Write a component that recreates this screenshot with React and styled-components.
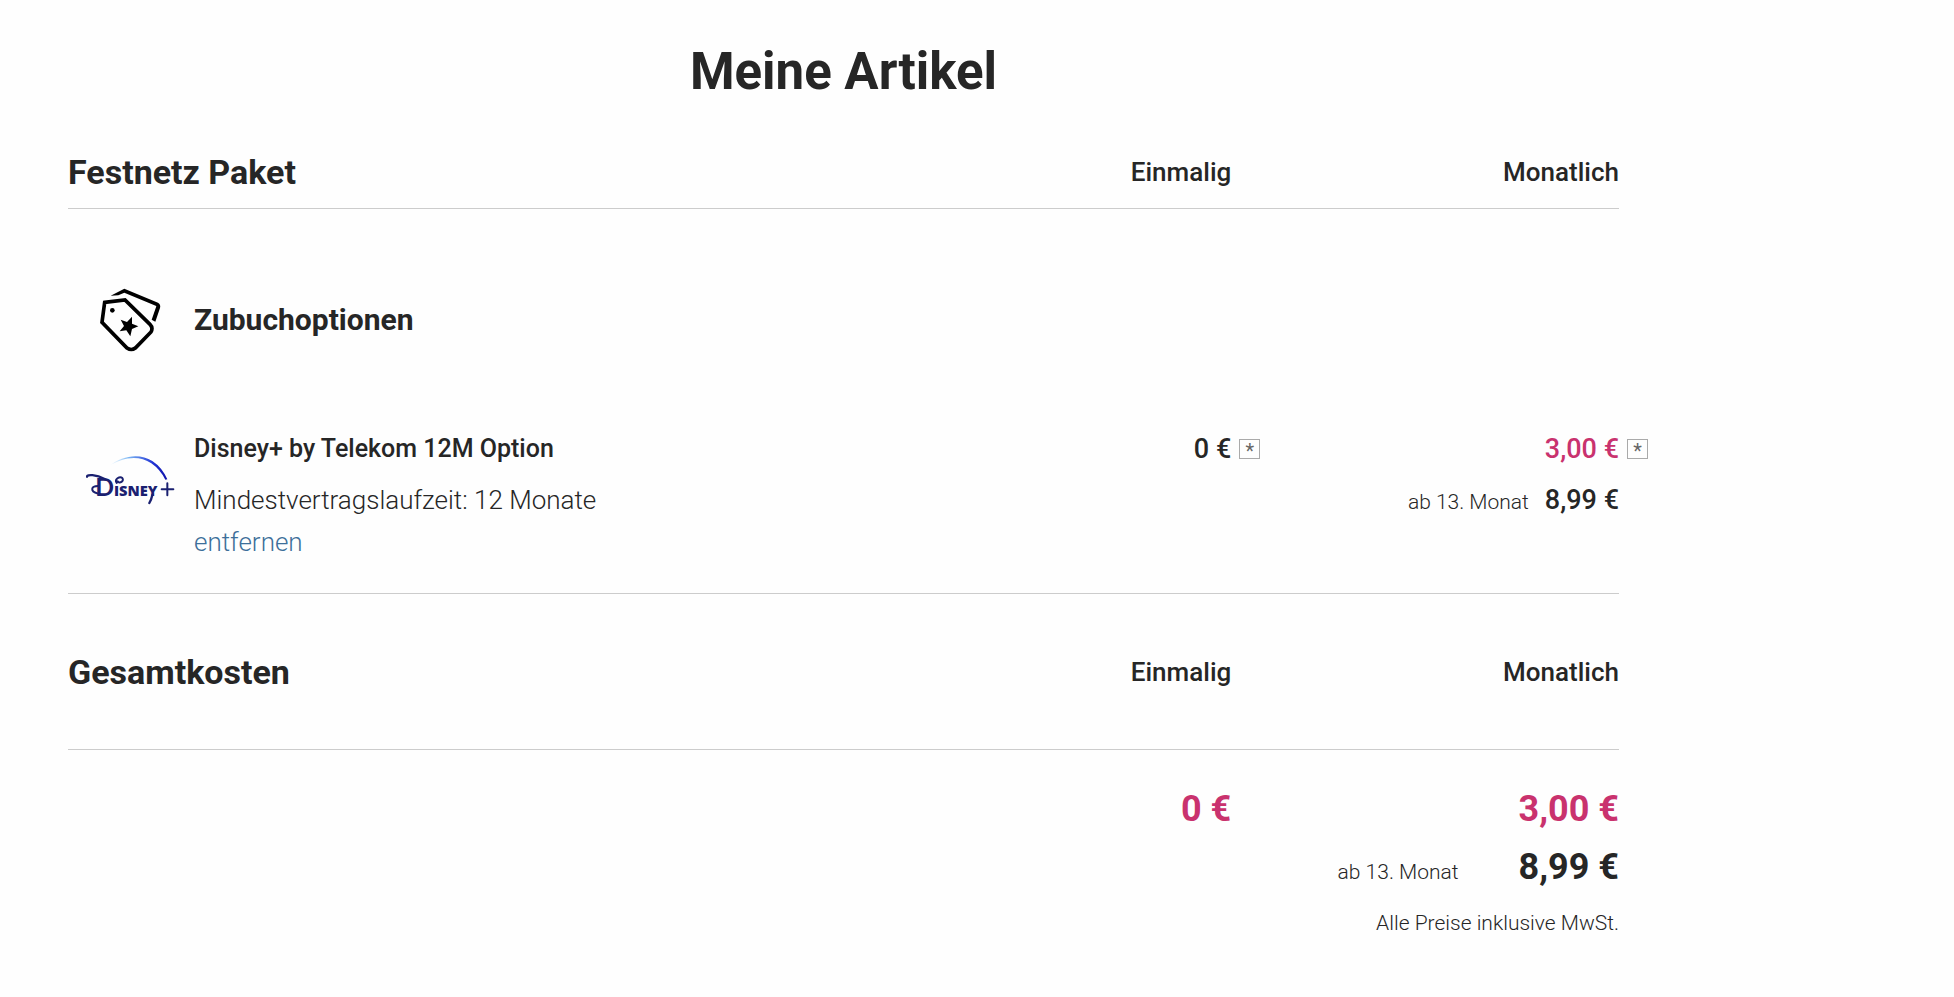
import styled, { createGlobalStyle } from "styled-components"

const GlobalStyle = createGlobalStyle`
    body {
        margin: 0;
        background-color: #fefefe;
        color: #262626;
        font-family: Roboto, "Liberation Sans", sans-serif;
    }
`

const CartContainer = styled.main`
    margin: 0 335px 0 68px;
    padding: 40px 0 48px;
`

const Cart__title = styled.h1`
    margin: 0 0 32px;
    font-size: 51px;
    line-height: 64px;
    font-weight: 700;
    text-align: center;
`

const CostTable = styled.table`
    width: 100%;
    table-layout: fixed;
    border-collapse: separate;
    border-spacing: 0;
`

const CostTable__headRow = styled.tr`
    height: ${props => props.$tall ? "156px" : "73px"};
`

const CostTable__title = styled.th`
    width: 50%;
    padding: 0;
    border-bottom: 1px solid #cccccc;
    font-size: 34px;
    line-height: 40px;
    font-weight: 700;
    text-align: left;
`

const CostTable__label = styled.th`
    width: 25%;
    padding: 0;
    border-bottom: 1px solid #cccccc;
    font-size: 26px;
    line-height: 36px;
    font-weight: 500;
    text-align: right;
`

const Category__cell = styled.th`
    height: 222px;
    padding: 0;
    font-size: 30px;
    line-height: 40px;
    font-weight: 700;
    text-align: left;
`

const Item = styled.div`
    display: flex;
    align-items: ${props => props.$top ? "flex-start" : "center"};
`

const Item__media = styled.div`
    display: flex;
    justify-content: center;
    flex: 0 0 126px;
    padding-top: ${props => props.$top ? "22px" : "0"};
`

const Item__cell = styled.td`
    padding: 0 0 30px;
    border-bottom: 1px solid #cccccc;
    vertical-align: top;
    text-align: right;
`

const Item__text = styled.div`
    text-align: left;
    font-size: 26px;
    line-height: 42px;
    font-weight: 300;
`

const Item__name = styled.div`
    margin-bottom: 12px;
    font-size: 25px;
    line-height: 36px;
    font-weight: 500;
`

const Item__remove = styled.a`
    color: #3d6f9a;
    text-decoration: none;
`

const Price = styled.div`
    position: relative;
    font-size: 27px;
    line-height: 36px;
    font-weight: 500;
    color: ${props => props.$promo ? "#c9326e" : "inherit"};
`

const PriceLater = styled.div`
    display: flex;
    justify-content: flex-end;
    align-items: baseline;
    gap: ${props => props.$total ? "60px" : "16px"};
    margin-top: ${props => props.$total ? "0" : "12px"};
    font-size: ${props => props.$total ? "36px" : "27px"};
    line-height: ${props => props.$total ? "58px" : "42px"};
    font-weight: ${props => props.$total ? 700 : 500};
`

const Note = styled.span`
    font-size: 21px;
    font-weight: 300;
`

// sits outside the column so the amounts stay right aligned
const Footnote__btn = styled.button`
    position: absolute;
    left: 100%;
    top: 8px;
    width: 21px;
    height: 20px;
    margin-left: 8px;
    padding: 0;
    border: 1px solid #aaaaaa;
    background-color: transparent;
    color: #666666;
    font-family: inherit;
    font-size: 20px;
    line-height: 22px;
    text-align: center;
`

const Total__cell = styled.td`
    padding: 30px 0 0;
    font-size: 36px;
    line-height: 58px;
    font-weight: 700;
    color: #c9326e;
    text-align: right;
`

const Later__cell = styled.td`
    padding: 0;
    text-align: right;
`

const Tax__cell = styled.td`
    padding: 0;
    font-size: 21px;
    line-height: 44px;
    font-weight: 300;
    text-align: right;
`

function TagsIcon (){
    return(
        <svg width="62" height="64" viewBox="28 24 186 192" fill="none" stroke="#000" strokeWidth="11" aria-hidden="true">
            <path d="M60 47 L101 26 L202 68 Q211 73 208 84 L194 125 L183 119 L197 79 L195 77 L101 38 L83 46 Z" fill="#000" stroke="none" />
            <path d="M42 67 L103 60 L178 133 Q188 143 181 156 L134 204 Q122 213 109 204 L34 127 Z" />
            <circle cx="65" cy="91" r="7" fill="#000" stroke="none" />
            <path d="M124 110 L124 131 L143 139 L124 147 L119 169 L107 151 L87 154 L100 138 L90 119 L109 126 Z" fill="#000" stroke="none" />
        </svg>
    )
}

function DisneyLogo (){
    return(
        <svg width="90" height="54" viewBox="20 38 270 162" role="img" aria-label="Disney+">
            <defs>
                <linearGradient id="arc" x1="0" x2="1" y1="0" y2="0">
                    <stop offset="0" stopColor="#bfe4fb" stopOpacity="0" />
                    <stop offset="0.35" stopColor="#79b4f3" />
                    <stop offset="0.75" stopColor="#2437d6" />
                    <stop offset="1" stopColor="#0d10a8" />
                </linearGradient>
            </defs>
            <path d="M86 79 C132 43 182 39 219 62 Q248 81 264 117 L258 118 Q242 87 216 69 C178 44 132 50 86 79 Z" fill="url(#arc)" />
            <g fill="none" stroke="#1a2070" strokeWidth="7" strokeLinecap="round" strokeLinejoin="round">
                <path d="M23 109 C23 102 50 102 76 116" />
                <path d="M56 137 C36 137 30 152 56 160" strokeWidth="6" />
                <path d="M112 128 C103 116 122 107 129 113 C136 122 120 132 115 123" strokeWidth="6" />
                <path d="M247 147 H282 M264 129 V165" strokeWidth="6" />
                <path d="M219 164 C217 174 214 181 210 188" />
            </g>
            <g fill="#1a2070">
                <text x="48" y="168" fontSize="74" fontFamily="Lato, sans-serif" fontWeight="700">D</text>
                <text x="104" y="168" fontSize="44" fontFamily="'Open Sans', sans-serif" fontWeight="800">ISNEY</text>
            </g>
        </svg>
    )
}

export default function App (){
    return(
        <CartContainer>
            <GlobalStyle />
            <Cart__title>Meine Artikel</Cart__title>

            <CostTable>
                <thead>
                    <CostTable__headRow>
                        <CostTable__title scope="col">Festnetz Paket</CostTable__title>
                        <CostTable__label scope="col">Einmalig</CostTable__label>
                        <CostTable__label scope="col">Monatlich</CostTable__label>
                    </CostTable__headRow>
                </thead>
                <tbody>
                    <tr>
                        <Category__cell colSpan="3">
                            <Item>
                                <Item__media><TagsIcon /></Item__media>
                                Zubuchoptionen
                            </Item>
                        </Category__cell>
                    </tr>
                    <tr>
                        <Item__cell>
                            <Item $top>
                                <Item__media $top><DisneyLogo /></Item__media>
                                <Item__text>
                                    <Item__name>Disney+ by Telekom 12M Option</Item__name>
                                    <div>Mindestvertragslaufzeit: 12 Monate</div>
                                    <Item__remove href="#entfernen">entfernen</Item__remove>
                                </Item__text>
                            </Item>
                        </Item__cell>
                        <Item__cell>
                            <Price>0 €<Footnote__btn>*</Footnote__btn></Price>
                        </Item__cell>
                        <Item__cell>
                            <Price $promo>3,00 €<Footnote__btn>*</Footnote__btn></Price>
                            <PriceLater><Note>ab 13. Monat</Note>8,99 €</PriceLater>
                        </Item__cell>
                    </tr>
                </tbody>
            </CostTable>

            <CostTable>
                <thead>
                    <CostTable__headRow $tall>
                        <CostTable__title scope="col">Gesamtkosten</CostTable__title>
                        <CostTable__label scope="col">Einmalig</CostTable__label>
                        <CostTable__label scope="col">Monatlich</CostTable__label>
                    </CostTable__headRow>
                </thead>
                <tbody>
                    <tr>
                        <Total__cell colSpan="2">0 €</Total__cell>
                        <Total__cell>3,00 €</Total__cell>
                    </tr>
                    <tr>
                        <Later__cell colSpan="3">
                            <PriceLater $total><Note>ab 13. Monat</Note>8,99 €</PriceLater>
                        </Later__cell>
                    </tr>
                    <tr>
                        <Tax__cell colSpan="3">Alle Preise inklusive MwSt.</Tax__cell>
                    </tr>
                </tbody>
            </CostTable>
        </CartContainer>
    )
}
